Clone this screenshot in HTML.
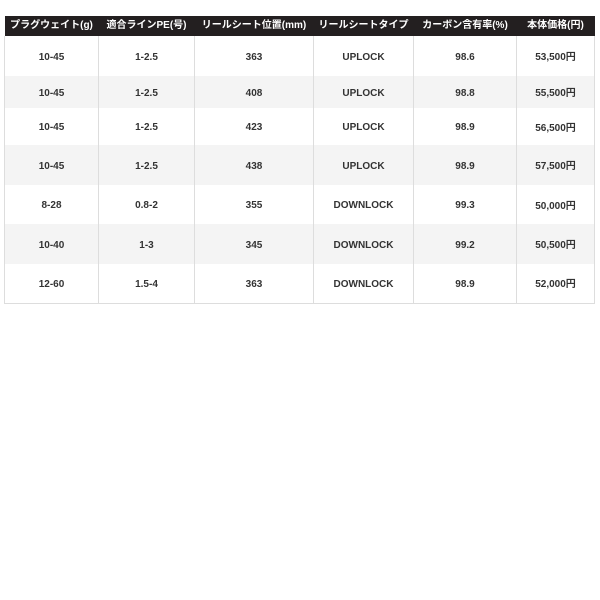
<!DOCTYPE html>
<html><head><style>
body{margin:0;background:#fff;font-family:"Liberation Sans","Noto Sans CJK JP",sans-serif;}
table{position:absolute;left:4px;top:16px;border-collapse:collapse;width:590px;table-layout:fixed;font-size:10px;font-weight:bold;color:#333;}
th{background:#231f20;color:#fff;height:20px;padding:0;font-size:10px;line-height:12px;vertical-align:middle;}
td{text-align:center;padding:3px 0 0 0;border-left:1px solid #ddd;border-right:1px solid #ddd;line-height:12px;vertical-align:middle;box-sizing:border-box;}
td span{display:inline-block;height:12px;line-height:12px;vertical-align:middle;position:relative;top:1px;}
tr.g td{background:#f4f4f4;}
tbody tr:last-child td{border-bottom:1px solid #ddd;}
</style></head><body>
<table>
<colgroup><col style="width:94px"><col style="width:96px"><col style="width:119px"><col style="width:100px"><col style="width:103px"><col style="width:78px"></colgroup>
<thead><tr><th>プラグウェイト(g)</th><th>適合ラインPE(号)</th><th>リールシート位置(mm)</th><th>リールシートタイプ</th><th>カーボン含有率(%)</th><th>本体価格(円)</th></tr></thead>
<tbody>
<tr style="height:40px"><td>10-45</td><td>1-2.5</td><td>363</td><td>UPLOCK</td><td>98.6</td><td><span>53,500円</span></td></tr>
<tr class="g" style="height:32px"><td>10-45</td><td>1-2.5</td><td>408</td><td>UPLOCK</td><td>98.8</td><td><span>55,500円</span></td></tr>
<tr style="height:37px"><td>10-45</td><td>1-2.5</td><td>423</td><td>UPLOCK</td><td>98.9</td><td><span>56,500円</span></td></tr>
<tr class="g" style="height:40px"><td>10-45</td><td>1-2.5</td><td>438</td><td>UPLOCK</td><td>98.9</td><td><span>57,500円</span></td></tr>
<tr style="height:39px"><td>8-28</td><td>0.8-2</td><td>355</td><td>DOWNLOCK</td><td>99.3</td><td><span>50,000円</span></td></tr>
<tr class="g" style="height:40px"><td>10-40</td><td>1-3</td><td>345</td><td>DOWNLOCK</td><td>99.2</td><td><span>50,500円</span></td></tr>
<tr style="height:39px"><td>12-60</td><td>1.5-4</td><td>363</td><td>DOWNLOCK</td><td>98.9</td><td><span>52,000円</span></td></tr>
</tbody></table>
</body></html>
